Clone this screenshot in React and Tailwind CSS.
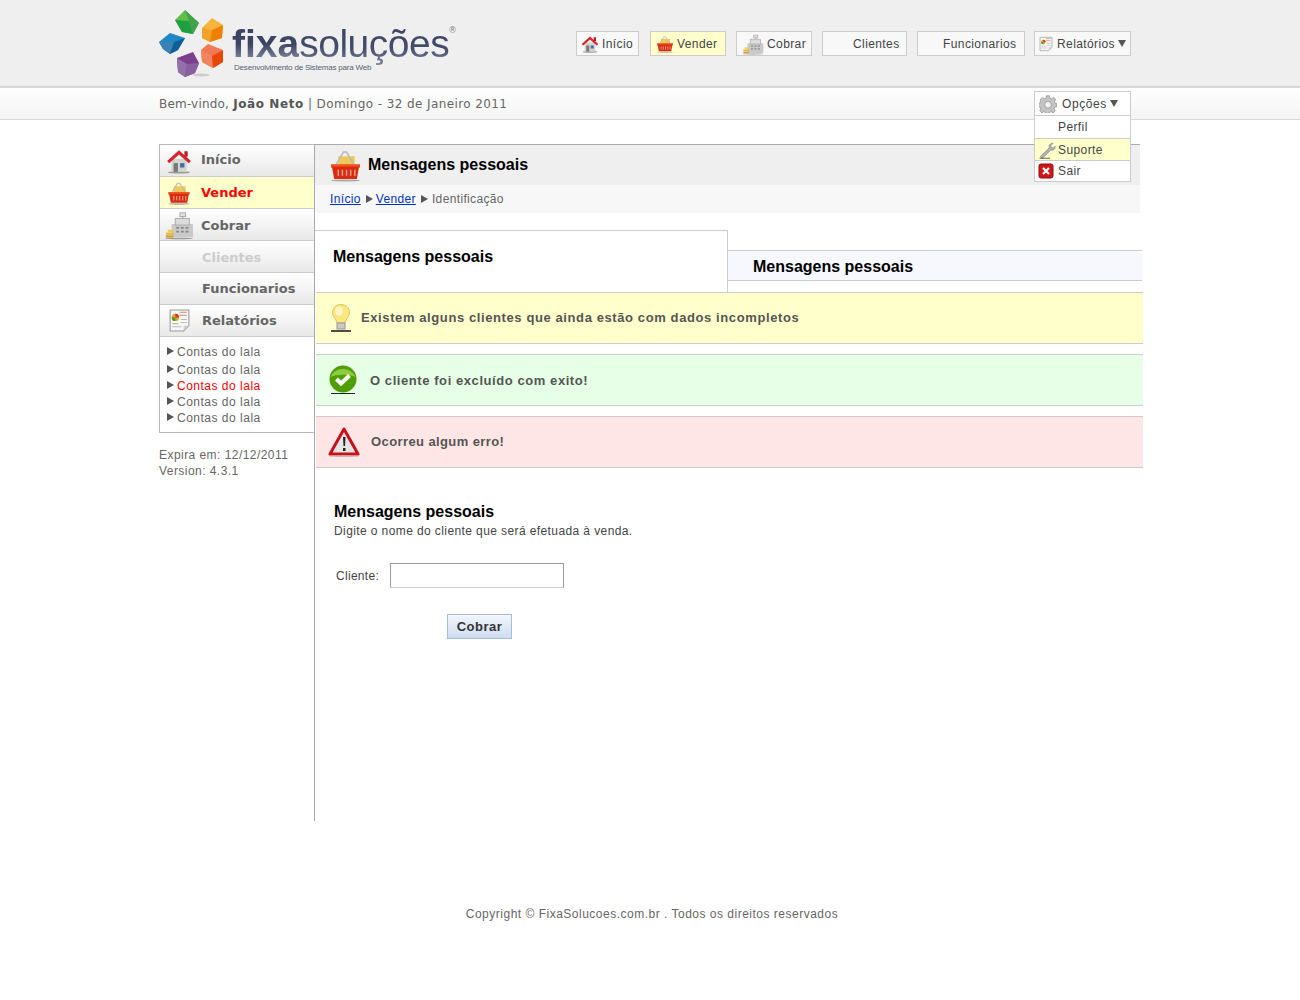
import React from "react";

const arial = { fontFamily: '"Liberation Sans", Arial, sans-serif' };
const verdana = { fontFamily: '"DejaVu Sans", Verdana, sans-serif' };

function House({ size = 20 }) {
  return (
    <svg width={size} height={size} viewBox="0 0 24 24" className="shrink-0">
      <ellipse cx="12" cy="22.5" rx="10" ry="1" fill="#999" />
      <rect x="5" y="10" width="14" height="12" fill="#d4d4cc" />
      <rect x="7" y="14" width="4" height="8" fill="#777" />
      <rect x="13" y="14" width="4" height="4" fill="#3a6ea8" />
      <path d="M1 12 12 2l11 10-2 2-9-8-9 8z" fill="#d8232a" />
      <rect x="17" y="3" width="3" height="5" fill="#b51c22" />
    </svg>
  );
}

function Basket({ size = 22 }) {
  return (
    <svg width={size} height={size} viewBox="0 0 32 32" className="shrink-0">
      <rect x="9" y="7" width="16" height="9" fill="#efc85a" />
      <path d="M7 15 14 3h3l7 12" fill="none" stroke="#bbb" strokeWidth="1.5" />
      <path d="M2 15h28v3h-1l-2 11H5L3 18H2z" fill="#d92b12" />
      <rect x="2" y="15" width="28" height="2" fill="#f0561f" />
      <path d="M9 20v6M13 20v6M17 20v6M21 20v6M25 20v6" stroke="#f2a27e" strokeWidth="1.5" />
      <ellipse cx="16" cy="30.5" rx="14" ry="1" fill="#aaa" />
    </svg>
  );
}

function Register({ size = 26 }) {
  return (
    <svg width={size} height={size} viewBox="0 0 32 32" className="shrink-0">
      <rect x="8" y="15" width="23" height="14" rx="1" fill="#c9c9c9" />
      <rect x="12" y="9" width="15" height="7" fill="#dcdcdc" stroke="#aaa" />
      <rect x="17" y="3" width="6" height="4" fill="#e2e2e2" stroke="#aaa" />
      <path d="M20 7v2" stroke="#999" />
      <path d="M13 19h3M18 19h3M23 19h3M13 23h3M18 23h3M23 23h3" stroke="#888" strokeWidth="2" />
      <rect x="2" y="24" width="8" height="2.5" fill="#e8b93f" />
      <rect x="2" y="27" width="8" height="2.5" fill="#d5a02b" />
      <rect x="4" y="21" width="6" height="2.5" fill="#efc85a" />
      <ellipse cx="16" cy="30.5" rx="15" ry="0.8" fill="#999" />
    </svg>
  );
}

function Report({ size = 22 }) {
  return (
    <svg width={size} height={size} viewBox="0 0 24 24" className="shrink-0">
      <path d="M3 2h18v15l-5 5H3z" fill="#f7f7f7" stroke="#999" />
      <path d="M16 22v-5h5z" fill="#ccc" />
      <path d="M12 4h7M12 7h7" stroke="#d98a6a" />
      <circle cx="8" cy="9" r="3.5" fill="#e3a32b" />
      <path d="M8 9V5.500A3.500 3.500 0 0 1 11.500 9z" fill="#d4322a" />
      <path d="M8 9H4.500A3.500 3.500 0 0 0 8 12.500z" fill="#4e9a2e" />
      <path d="M13 11h6M13 14h6M5 15h6M5 18h9" stroke="#bbb" />
    </svg>
  );
}

function Gear() {
  return (
    <svg width="18" height="18" viewBox="0 0 24 24" className="shrink-0">
      <path
        d="M10 1h4l.6 3 2.400 1 2.600-1.700 2.800 2.800L20.700 8.700l1 2.300 2.300.5v4l-3 .6-1 2.400 1.700 2.600-2.800 2.800-2.600-1.700-2.400 1-.6 1.800h-4l-.6-1.800-2.400-1-2.600 1.700-2.800-2.800 1.700-2.600-1-2.400-3-.6v-4l2.300-.5 1-2.300L1.600 6.100l2.800-2.800L7 5l2.400-1z"
        fill="#c4c4c4"
        stroke="#8f8f8f"
      />
      <circle cx="12" cy="13" r="4.500" fill="#f2f2f2" stroke="#8f8f8f" />
    </svg>
  );
}

function Wrench() {
  return (
    <svg width="18" height="18" viewBox="0 0 24 24" className="shrink-0">
      <path d="M3 21 15 9c-1-3 1-6 5-6l-3 3 1 3 3 0 2-2c0 4-3 6-6 5L6 23z" fill="#b4b4b4" stroke="#8b8b8b" />
      <path d="M2 23h14" stroke="#333" />
    </svg>
  );
}

function CloseBox() {
  return (
    <svg width="16" height="16" viewBox="0 0 16 16" className="shrink-0">
      <rect x="1" y="1" width="14" height="14" rx="2" fill="#d01616" stroke="#8e0b0b" />
      <path d="m5 5 6 6M11 5l-6 6" stroke="#fff" strokeWidth="2.200" />
    </svg>
  );
}

function Bulb() {
  return (
    <svg width="24" height="30" viewBox="0 0 24 30" className="shrink-0">
      <path
        d="M12 1.500c5 0 8.500 3.500 8.500 8 0 4-3.500 6-4.500 10.500H8C7 15.500 3.500 13.500 3.500 9.500c0-4.500 3.500-8 8.500-8z"
        fill="#fbe680"
        stroke="#e0c65a"
      />
      <ellipse cx="10" cy="8" rx="4" ry="4.500" fill="#fff6c4" />
      <rect x="8" y="20" width="8" height="6" fill="#c9c9c9" stroke="#999" />
      <path d="M2 28h20" stroke="#111" strokeWidth="1.500" />
    </svg>
  );
}

function CheckBall() {
  return (
    <svg width="30" height="30" viewBox="0 0 30 30" className="shrink-0">
      <circle cx="15" cy="14" r="13.500" fill="#4f9e06" />
      <path d="M2.500 12a13 11 0 0 1 25 0c-6-3-19-3-25 0z" fill="#8ccc3e" />
      <path d="m8.500 14 4.500 4.500 8.500-8" fill="none" stroke="#fff" strokeWidth="4" />
      <path d="M3 28.500h24" stroke="#222" />
    </svg>
  );
}

function WarnTriangle() {
  return (
    <svg width="32" height="30" viewBox="0 0 32 30" className="shrink-0">
      <path d="M16 2 30 27H2z" fill="#e4e4e4" stroke="#c8101a" strokeWidth="3" strokeLinejoin="round" />
      <path d="M15 10h2.500l-.5 9h-1.500zM15 21h2.500v3H15z" fill="#222" />
      <ellipse cx="16" cy="29.300" rx="15" ry="0.700" fill="#bbb" />
    </svg>
  );
}

// small grey triangles used in the menus and breadcrumb
function ArrowRight({ className }) {
  return (
    <svg width="7" height="8" viewBox="0 0 7 8" className={`shrink-0 ${className || ""}`}>
      <path d="M0 0 7 4 0 8z" fill="#555" />
    </svg>
  );
}

function ArrowDown({ className }) {
  return (
    <svg width="8" height="7" viewBox="0 0 8 7" className={`shrink-0 ${className || ""}`}>
      <path d="M0 0h8L4 7z" fill="#555" />
    </svg>
  );
}

function Cube({ outer, center, light, mid, dark, a, b }) {
  // outer = hexagon points, a/b = indexes where the dark facet starts and ends
  const pts = outer.map((p) => p.join(",")).join(" ");
  const darkPts = [center, ...outer.slice(a, b + 1)].map((p) => p.join(",")).join(" ");
  const midPts = [center, ...outer.slice(b), outer[0]].map((p) => p.join(",")).join(" ");
  return (
    <g>
      <polygon points={pts} fill={light} />
      <polygon points={midPts} fill={mid} />
      <polygon points={darkPts} fill={dark} />
    </g>
  );
}

function Logo() {
  return (
    <div className="flex items-start w-[300px] h-[70px]">
      <svg width="70" height="70" viewBox="0 0 70 70" className="shrink-0">
        <ellipse cx="42" cy="66" rx="9" ry="1.500" fill="#ccc" />
        <Cube outer={[[16, 11], [26, 1], [40, 14], [34, 25], [23, 23]]} center={[30, 12]} light="#62bd4a" mid="#1f9f3f" dark="#44a04a" a={1} b={3} />
        <Cube outer={[[43, 19], [53, 9], [64, 16], [63, 29], [51, 33], [43, 29]]} center={[53, 21]} light="#f5b43c" mid="#f4a12a" dark="#f08000" a={2} b={4} />
        <Cube outer={[[0, 33], [11, 24], [26, 29], [19, 41], [11, 45], [4, 40]]} center={[15, 33]} light="#1f86c8" mid="#3a82b4" dark="#0f5f94" a={2} b={4} />
        <Cube outer={[[42, 41], [49, 35], [64, 41], [64, 53], [54, 59], [43, 53]]} center={[53, 47]} light="#f5775a" mid="#f2855f" dark="#e84806" a={2} b={4} />
        <Cube outer={[[18, 49], [34, 43], [40, 54], [36, 64], [26, 68], [19, 63]]} center={[28, 55]} light="#7c3f8e" mid="#9270a8" dark="#8a5fa0" a={2} b={4} />
      </svg>
      <div className="ml-[3px] pt-[16px]" style={arial}>
        <div className="flex items-baseline text-[39px] leading-[38px] overflow-visible">
          <span className="font-bold bg-gradient-to-b from-[#3b4463] via-[#3b4463] to-[#9297a8] bg-clip-text text-transparent">fixa</span>
          <span className="tracking-[-0.5px] bg-gradient-to-b from-[#3b4463] via-[#434c69] to-[#9297a8] bg-clip-text text-transparent pb-[8px] -mb-[8px]">soluções</span>
          <span className="text-[9px] leading-[9px] self-start mt-[1px] text-[#777]">®</span>
        </div>
        <div className="text-[8px] leading-[10px] ml-[2px] tracking-[-0.2px] text-[#555f78]">Desenvolvimento de Sistemas para Web</div>
      </div>
    </div>
  );
}

function TopButton({ icon, label, width, active, caret, pad }) {
  return (
    <div
      className={`h-[25px] flex items-center border border-[#cccccc] text-[12px] tracking-[0.4px] text-[#444] ${
        active ? "bg-[#ffffcc]" : "bg-[#f8f8f8]"
      } ${width} ${pad}`}
    >
      {icon}
      <span className="ml-[3px]">{label}</span>
      {caret && <ArrowDown className="ml-[3px]" />}
    </div>
  );
}

function SideItem({ icon, label, active, muted, labelClass }) {
  return (
    <div
      className={`h-[32px] flex items-center border-b border-[#cccccc] ${
        active ? "bg-[#ffffcc]" : "bg-gradient-to-b from-white to-[#e9e9e9]"
      }`}
    >
      <div className="w-[38px] flex justify-center shrink-0">{icon}</div>
      <span
        className={`font-bold text-[13px] ${labelClass} ${
          active ? "text-[#ff0000]" : muted ? "text-[#cccccc]" : "text-[#666]"
        }`}
        style={verdana}
      >
        {label}
      </span>
    </div>
  );
}

function SubLink({ red, tall }) {
  return (
    <div className={`flex items-center ${tall ? "h-[20px]" : "h-[16px]"}`}>
      <ArrowRight className="mr-[3px] -mt-[2px]" />
      <span className={`text-[12px] tracking-[0.5px] ${red ? "text-[#ff0000]" : "text-[#666]"}`}>Contas do lala</span>
    </div>
  );
}

function Alert({ bg, icon, text, pad, textClass }) {
  return (
    <div className={`h-[52px] flex items-center border-y border-[#cccccc] ${bg} ${pad}`}>
      {icon}
      <span className={`font-bold text-[13px] text-[#555] ${textClass}`}>{text}</span>
    </div>
  );
}

export default function App() {
  return (
    <div className="w-[1300px] min-h-[1000px] bg-white text-[#444]" style={arial}>
      <div className="h-[87px] bg-[#efefef] border-b border-[#d4d4d4]">
        <div className="w-[982px] ml-[159px] flex items-start pt-[9px]">
          <Logo />
          <div className="flex-1 flex justify-end gap-[10px] pt-[22px] pr-[10px]">
            <TopButton icon={<House size={18} />} label="Início" width="w-[63px]" pad="pl-[4px] mr-[1px]" />
            <TopButton icon={<Basket size={18} />} label="Vender" width="w-[76px]" pad="pl-[5px]" active />
            <TopButton icon={<Register size={22} />} label="Cobrar" width="w-[76px]" pad="pl-[5px]" />
            <TopButton label="Clientes" width="w-[85px]" pad="pl-[27px]" />
            <TopButton label="Funcionarios" width="w-[108px]" pad="pl-[22px]" />
            <TopButton icon={<Report size={16} />} label="Relatórios" width="w-[97px]" pad="pl-[3px] -ml-[1px]" caret />
          </div>
        </div>
      </div>

      <div className="h-[33px] border-t border-[#d8d8d8] border-b bg-gradient-to-b from-white to-[#f4f4f4]">
        <div className="relative w-[982px] ml-[159px] h-full flex items-center text-[12px] text-[#666]" style={verdana}>
          <span className="tracking-[0.2px]">Bem-vindo,</span>
          <span className="font-bold ml-[4px] tracking-[0.6px] text-[#555]">João Neto</span>
          <span className="ml-[4px] tracking-[0.4px]">| Domingo - 32 de Janeiro 2011</span>

          <div className="absolute left-[875px] top-[3px] w-[97px] border border-[#cccccc] bg-white z-10 text-[12px] text-[#444] tracking-[0.4px]" style={arial}>
            <div className="h-[24px] flex items-center pl-[4px] border-b border-[#cccccc]">
              <Gear />
              <span className="ml-[5px] tracking-[0.6px]">Opções</span>
              <ArrowDown className="ml-[3px]" />
            </div>
            <div className="h-[23px] flex items-center pl-[23px] border-b border-[#cccccc]">Perfil</div>
            <div className="h-[22px] flex items-center pl-[3px] gap-[2px] border-b border-[#cccccc] bg-[#ffffcc]">
              <Wrench />
              Suporte
            </div>
            <div className="h-[20px] flex items-center pl-[3px] gap-[4px]">
              <CloseBox />
              Sair
            </div>
          </div>
        </div>
      </div>

      <div className="w-[982px] ml-[159px] mt-[24px] flex items-start">
        <div className="w-[155px] shrink-0">
          <div className="border-t border-l border-b border-[#bbbbbb]">
            <SideItem icon={<House size={26} />} label="Início" labelClass="ml-[3px] -mt-[2px]" />
            <SideItem icon={<Basket size={24} />} label="Vender" labelClass="ml-[3px]" active />
            <SideItem icon={<Register size={30} />} label="Cobrar" labelClass="ml-[3px] pt-[2px]" />
            <SideItem label="Clientes" labelClass="ml-[4px] pt-[2px]" muted />
            <SideItem label="Funcionarios" labelClass="ml-[4px]" />
            <SideItem icon={<Report size={25} />} label="Relatórios" labelClass="ml-[4px]" />
            <div className="h-[95px] pl-[7px] pt-[5px]">
              <SubLink tall />
              <SubLink />
              <SubLink red />
              <SubLink />
              <SubLink />
            </div>
          </div>
          <div className="mt-[14px] text-[12px] leading-[16px] tracking-[0.45px] text-[#666]">
            <div>Expira em: 12/12/2011</div>
            <div>Version: 4.3.1</div>
          </div>
        </div>

        <div className="w-[828px] h-[677px] shrink-0 border-l border-[#aaaaaa]">
          <div className="w-[825px] h-[41px] bg-[#efefef] border-t border-[#aaaaaa] flex items-center pl-[14px]">
            <Basket size={33} />
            <span className="ml-[6px] text-[16px] font-bold text-black">Mensagens pessoais</span>
          </div>
          <div className="w-[825px] h-[28px] bg-[#f7f7f7] flex items-center pl-[15px] text-[12px] tracking-[0.35px] text-[#666]">
            <a className="text-[#0033cc] underline">Início</a>
            <ArrowRight className="ml-[5px] mr-[3px]" />
            <a className="text-[#0033cc] underline">Vender</a>
            <ArrowRight className="ml-[5px] mr-[4px]" />
            <span>Identificação</span>
          </div>

          <div className="mt-[17px] flex items-start">
            <div className="w-[413px] h-[62px] border-t border-r border-[#cccccc] pl-[18px] pt-[16px] text-[16px] leading-[20px] font-bold text-black shrink-0">
              Mensagens pessoais
            </div>
            <div className="w-[414px] h-[31px] mt-[20px] border-y border-[#cccccc] bg-[#f7f8fd] pl-[25px] pt-[6px] text-[16px] leading-[20px] font-bold text-black shrink-0">
              Mensagens pessoais
            </div>
          </div>

          <div className="w-[827px] ml-[1px] flex flex-col gap-[10px]">
            <Alert bg="bg-[#ffffcc]" icon={<Bulb />} pad="pl-[13px]" textClass="ml-[8px] tracking-[0.6px]" text="Existem alguns clientes que ainda estão com dados incompletos" />
            <Alert bg="bg-[#e6ffe6]" icon={<CheckBall />} pad="pl-[12px]" textClass="ml-[12px] pt-[2px] tracking-[0.57px]" text="O cliente foi excluído com exito!" />
            <Alert bg="bg-[#ffe6e6]" icon={<WarnTriangle />} pad="pl-[12px]" textClass="ml-[11px] tracking-[0.4px]" text="Ocorreu algum erro!" />
          </div>

          <div className="pl-[19px] pt-[34px]">
            <div className="text-[16px] leading-[19px] font-bold text-black">Mensagens pessoais</div>
            <div className="text-[12px] leading-[21px] tracking-[0.4px] text-[#444]">Digite o nome do cliente que será efetuada à venda.</div>
            <div className="mt-[21px] flex items-center">
              <label className="ml-[2px] w-[54px] text-[12px] tracking-[0.3px] text-[#444]">Cliente:</label>
              <input className="w-[174px] h-[25px] border border-t-[#999] border-l-[#999] border-r-[#999] border-b-[#ccc] bg-white outline-0" />
            </div>
            <button className="mt-[26px] ml-[113px] block w-[65px] h-[25px] border border-[#a6bcd8] bg-gradient-to-b from-[#f3f6fb] to-[#cfdcf0] text-[13px] font-bold tracking-[0.5px] text-[#333]">
              Cobrar
            </button>
          </div>
        </div>
      </div>

      <div className="mt-[84px] pl-[4px] text-center text-[12px] tracking-[0.5px] text-[#666]">
        Copyright © FixaSolucoes.com.br . Todos os direitos reservados
      </div>
    </div>
  );
}
